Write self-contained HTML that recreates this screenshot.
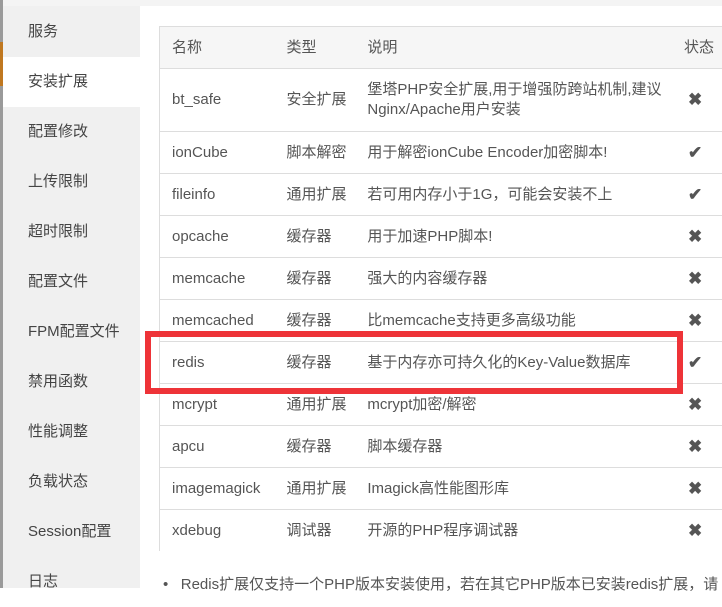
<!DOCTYPE html>
<html><head><meta charset="utf-8"><style>
body{margin:0;width:722px;height:588px;overflow:hidden;background:#fff;font-family:"Liberation Sans","Noto Sans CJK SC",sans-serif;position:relative}
.top{position:absolute;left:0;top:0;width:722px;height:6px;background:#f4f4f4}
.edge{position:absolute;left:0;top:0;width:3px;height:588px;background:#9a9a9a}
.or{position:absolute;left:0;top:42px;width:3px;height:44px;background:#c07820}
.side{position:absolute;left:3px;top:6px;width:137px;height:582px;background:#f0f0f0}
.side div{position:absolute;left:0;width:137px;height:50px;line-height:50px;padding-left:25px;box-sizing:border-box;font-size:15px;color:#444}
.side .act{background:#fff}
table{position:absolute;left:159px;top:26px;border-collapse:collapse;font-size:15px;color:#555}
td,th{border-top:1px solid #ddd;padding:0 0 0 12px;text-align:left;font-weight:normal;height:41px;vertical-align:middle;line-height:20px}
th{background:#f6f6f6;height:41px}
table{border-left:1px solid #ddd;border-top:1px solid #ddd}
.red{position:absolute;left:145px;top:331px;width:538px;height:63px;box-sizing:border-box;border:6px solid #ee3338}
.note{position:absolute;left:163px;top:573px;font-size:15px;color:#555;white-space:nowrap}
.i{font-size:17px;color:#555;padding-left:26px!important;font-weight:bold}
</style></head><body>
<div class="top"></div>
<div class="side">
<div style="top:1px">服务</div>
<div class="act" style="top:51px">安装扩展</div>
<div style="top:101px">配置修改</div>
<div style="top:151px">上传限制</div>
<div style="top:201px">超时限制</div>
<div style="top:251px">配置文件</div>
<div style="top:301px">FPM配置文件</div>
<div style="top:351px">禁用函数</div>
<div style="top:401px">性能调整</div>
<div style="top:451px">负载状态</div>
<div style="top:501px">Session配置</div>
<div style="top:551px">日志</div>
</div>
<div class="edge"></div><div class="or"></div>
<table>
<colgroup><col style="width:115px"><col style="width:81px"><col style="width:307px"><col style="width:60px"></colgroup>
<tr><th>名称</th><th>类型</th><th>说明</th><th style="padding-left:22px">状态</th></tr>
<tr><td style="height:62px">bt_safe</td><td>安全扩展</td><td>堡塔PHP安全扩展,用于增强防跨站机制,建议Nginx/Apache用户安装</td><td class="i">✖</td></tr>
<tr><td>ionCube</td><td>脚本解密</td><td>用于解密ionCube Encoder加密脚本!</td><td class="i">✔</td></tr>
<tr><td>fileinfo</td><td>通用扩展</td><td>若可用内存小于1G，可能会安装不上</td><td class="i">✔</td></tr>
<tr><td>opcache</td><td>缓存器</td><td>用于加速PHP脚本!</td><td class="i">✖</td></tr>
<tr><td>memcache</td><td>缓存器</td><td>强大的内容缓存器</td><td class="i">✖</td></tr>
<tr><td>memcached</td><td>缓存器</td><td>比memcache支持更多高级功能</td><td class="i">✖</td></tr>
<tr><td>redis</td><td>缓存器</td><td>基于内存亦可持久化的Key-Value数据库</td><td class="i">✔</td></tr>
<tr><td>mcrypt</td><td>通用扩展</td><td>mcrypt加密/解密</td><td class="i">✖</td></tr>
<tr><td>apcu</td><td>缓存器</td><td>脚本缓存器</td><td class="i">✖</td></tr>
<tr><td>imagemagick</td><td>通用扩展</td><td>Imagick高性能图形库</td><td class="i">✖</td></tr>
<tr><td>xdebug</td><td>调试器</td><td>开源的PHP程序调试器</td><td class="i">✖</td></tr>
</table>
<div class="red"></div>
<div class="note">•&nbsp;&nbsp;&nbsp;Redis扩展仅支持一个PHP版本安装使用，若在其它PHP版本已安装redis扩展，请</div>
</body></html>
